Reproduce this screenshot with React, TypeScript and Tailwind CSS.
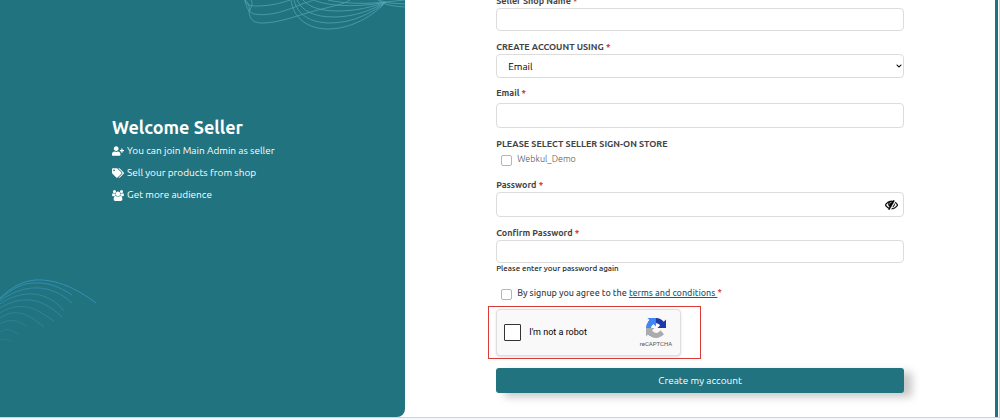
import type { ReactNode } from "react";
import { FaChevronDown, FaTags, FaUserPlus } from "react-icons/fa";

const inputStyle =
  "block w-full rounded border border-[#dcdcdc] bg-white px-3 text-[10px] text-black outline-none";

const checkboxStyle =
  "size-[11px] appearance-none rounded-[2px] border border-[#b5b5b5] bg-white checked:bg-[#227380]";

function Required() {
  return <span className="text-[#c9302c]">*</span>;
}

function Label({ htmlFor, children }: { htmlFor: string; children: ReactNode }) {
  return (
    <label htmlFor={htmlFor} className="block text-[9px] leading-[14px] font-semibold text-[#444]">
      {children} <Required />
    </label>
  );
}

function GroupIcon() {
  return (
    <svg viewBox="0 0 1920 1792" className="h-[11px] w-3 fill-current" aria-hidden="true">
      <path d="M593 896q-162 5-265 128H194q-82 0-138-40.5T0 865q0-353 124-353 6 0 43.5 21t97.5 42.5T384 597q67 0 133-23-5 37-5 66 0 139 81 256zm1071 637q0 120-73 189.5t-194 69.5H523q-121 0-194-69.5T256 1533q0-53 3.5-103.5t14-109T300 1212t43-97.5 62-81 85.5-53.5T602 960q10 0 43 21.5t73 48 107 48 135 21.5 135-21.5 107-48 73-48 43-21.5q61 0 111.5 20t85.5 53.5 62 81 43 97.5 26.5 108.5 14 109 3.5 103.5zM640 256q0 106-75 181t-181 75-181-75-75-181 75-181T384 0t181 75 75 181zm704 384q0 159-112.5 271.5T960 1024 688.5 911.5 576 640t112.5-271.5T960 256t271.5 112.5T1344 640zm576 225q0 78-56 118.5t-138 40.5h-134q-103-123-265-128 81-117 81-256 0-29-5-66 66 23 133 23 59 0 119-21.5t97.5-42.5 43.5-21q124 0 124 353zm-128-609q0 106-75 181t-181 75-181-75-75-181 75-181 181-75 181 75 75 181z" />
    </svg>
  );
}

function EyeSlashIcon() {
  return (
    <svg viewBox="0 288 1792 1344" className="h-[10px] w-[13px] fill-black stroke-black" strokeWidth="40" aria-hidden="true">
      <path d="M555 1335l78-141q-87-63-136-159t-49-203q0-121 61-225-229 117-381 353 167 258 427 375zm389-759q0-20-14-34t-34-14q-125 0-214.5 89.5T592 832q0 20 14 34t34 14 34-14 14-34q0-86 61-147t147-61q20 0 34-14t14-34zm363-191q0 7-1 9-106 189-316 567t-315 566l-49 89q-10 16-28 16-12 0-134-70-16-10-16-28 0-12 44-87-143-65-263.5-173T20 1029Q0 998 0 960t20-69q153-235 380-371t496-136q89 0 180 17l54-97q10-16 28-16 5 0 18 6t31 15.5 33 18.5 31.5 18.5T1291 358q16 10 16 27zm37 447q0 139-79 253.5T1056 1250l280-502q8 45 8 84zm448 128q0 35-20 69-39 64-109 145-150 172-347.5 267T896 1536l74-132q212-18 392.5-137T1664 960q-115-179-282-294l63-112q95 64 182.5 153T1772 891q20 34 20 69z" />
    </svg>
  );
}

function CaptchaLogo() {
  return (
    <svg viewBox="0 0 64 64" className="size-5" aria-hidden="true">
      <path fill="#1c3aa9" d="M64 31.955l-.033-1.37V4.687l-7.16 7.16C50.948 4.674 42.033.093 32.05.093c-10.4 0-19.622 4.96-25.458 12.64l11.736 11.86a15.55 15.55 0 0 1 4.754-5.334c2.05-1.6 4.952-2.906 8.968-2.906.485 0 .86.057 1.135.163 4.976.393 9.288 3.14 11.828 7.124l-8.307 8.307L64 31.953" />
      <path fill="#4285f4" d="M31.862.094l-1.37.033H4.594l7.16 7.16C4.58 13.147 0 22.06 0 32.046c0 10.4 4.96 19.622 12.64 25.458L24.5 45.768a15.55 15.55 0 0 1-5.334-4.754c-1.6-2.05-2.906-4.952-2.906-8.968 0-.485.057-.86.163-1.135.393-4.976 3.14-9.288 7.124-11.828l8.307 8.307L31.86.095" />
      <path fill="#ababab" d="M.001 32.045l.033 1.37v25.898l7.16-7.16c5.86 7.173 14.774 11.754 24.76 11.754 10.4 0 19.622-4.96 25.458-12.64l-11.736-11.86a15.55 15.55 0 0 1-4.754 5.334c-2.05 1.6-4.952 2.906-8.968 2.906-.485 0-.86-.057-1.135-.163-4.976-.393-9.288-3.14-11.828-7.124l8.307-8.307c-10.522.04-22.4.066-27.295-.005" />
    </svg>
  );
}

function TopWaves() {
  return (
    <svg viewBox="0 0 165 34" className="absolute top-0 right-0 h-[34px] w-[165px]" fill="none" stroke="#5fb4c4" strokeWidth="0.8" opacity="0.75" aria-hidden="true">
      <path d="M5 0C8 2 10 6 9 12C10 19 13 23 22 23C40 23 58 15 78 10C94 6 104 4 110 0" />
      <path d="M5 0C6 6 8 12 14 14C30 17 48 10 62 4C68 2 71 1 74 0" />
      <path d="M5 0C5 4 9 6 16 6C30 6 42 3 50 0" />
      <path d="M11 0C13 3 12 6 9 12" />
      <path d="M51 0C53 18 68 29 88 29C112 29 134 15 146 2" />
      <path d="M54 0C57 14 70 23 90 23C114 23 133 12 146 2" />
      <path d="M57 0C62 11 74 17 94 17C114 17 132 10 146 2" />
      <path d="M63 0C70 8 82 11 98 11C116 11 132 7 146 2" />
      <path d="M74 0C86 6 118 8 146 2" />
      <path d="M88 0C105 4 128 4 146 2L165 0" />
      <path d="M140 0C146 4 154 3 165 4" />
      <path d="M138 0C146 6 154 6 165 7" />
    </svg>
  );
}

function BottomWaves() {
  return (
    <svg viewBox="0 0 100 80" className="absolute bottom-[58px] left-0 h-20 w-[100px]" fill="none" stroke="#3d9bc4" strokeWidth="0.8" aria-hidden="true">
      <path opacity="0.9" d="M0 19C12 8 22 2 36 1C56 0 76 9 96 24" />
      <path opacity="0.8" d="M0 20C12 10 22 4 34 4C48 3 60 8 72 16" />
      <path opacity="0.7" d="M0 22C16 10 34 6 50 11C62 15 66 19 72 24" />
      <path opacity="0.6" d="M0 25C16 14 34 12 48 19C56 23 60 27 64 32" />
      <path opacity="0.6" d="M0 29C16 19 32 19 44 25C52 29 58 34 62 38" />
      <path opacity="0.5" d="M0 34C14 25 28 26 40 33L54 42" />
      <path opacity="0.5" d="M0 39C12 31 22 33 32 39L44 48" />
      <path opacity="0.4" d="M0 45C8 40 16 40 26 47" />
      <path opacity="0.35" d="M0 53C6 49 10 50 18 55" />
      <path opacity="0.3" d="M0 61C5 59 8 60 12 63" />
    </svg>
  );
}

const benefits = [
  { icon: <FaUserPlus className="w-3" />, text: "You can join Main Admin as seller" },
  { icon: <FaTags className="w-3" />, text: "Sell your products from shop" },
  { icon: <GroupIcon />, text: "Get more audience" },
];

export default function App() {
  return (
    <div className="min-h-screen overflow-hidden bg-[#f3f6fb] font-[Ubuntu,'Noto_Sans',sans-serif]">
      <div className="flex border-r border-b border-[#ccd3df] bg-white pr-px">
        <aside className="relative w-[40.6%] overflow-hidden rounded-br-lg bg-[#227380] pt-[116px] pl-28 text-white">
          <TopWaves />
          <BottomWaves />
          <h1 className="text-lg leading-[22px] font-bold">Welcome Seller</h1>
          <ul className="mt-[6px] flex flex-col gap-2">
            {benefits.map((item) => (
              <li key={item.text} className="flex items-center gap-[3px] text-[10px] leading-[14px]">
                {item.icon}
                <span>{item.text}</span>
              </li>
            ))}
          </ul>
        </aside>

        <main className="flex-1 border-r-[3px] border-[#227380] px-[91px]">
          <form className="-mt-[6px] pb-6" onSubmit={(e) => e.preventDefault()}>
            <Label htmlFor="shop">Seller Shop Name</Label>
            <input id="shop" type="text" className={`${inputStyle} h-[23px]`} />

            <div className="mt-[9px]">
              <Label htmlFor="method">CREATE ACCOUNT USING</Label>
              <div className="relative">
                <select id="method" className="block h-6 w-full appearance-none rounded border border-[#dcdcdc] bg-white px-[11px] text-[10px] text-black">
                  <option>Email</option>
                  <option>Phone</option>
                </select>
                <FaChevronDown className="pointer-events-none absolute top-[9px] right-[2px] size-[6px] text-black" />
              </div>
            </div>

            <div className="mt-2">
              <Label htmlFor="email">Email</Label>
              <input id="email" type="email" className={`${inputStyle} mt-[3px] h-[25px]`} />
            </div>

            <fieldset className="mt-[9px]">
              <legend className="text-[9px] leading-[14px] font-semibold text-[#444]">
                PLEASE SELECT SELLER SIGN-ON STORE
              </legend>
              <label className="mt-[3px] ml-[5px] flex h-3 items-center gap-[5px] text-[9px] font-light text-[#555]">
                <input type="checkbox" className={checkboxStyle} />
                Webkul_Demo
              </label>
            </fieldset>

            <div className="mt-3">
              <Label htmlFor="password">Password</Label>
              <div className="flex h-[25px] items-center rounded border border-[#dcdcdc] pr-[5px]">
                <input id="password" type="password" className="h-full min-w-0 flex-1 bg-transparent px-3 text-[10px] outline-none" />
                <button type="button" aria-label="Show password">
                  <EyeSlashIcon />
                </button>
              </div>
            </div>

            <div className="mt-[9px]">
              <Label htmlFor="confirm">Confirm Password</Label>
              <input id="confirm" type="password" className={`${inputStyle} h-[23px]`} aria-describedby="confirm-help" />
              <p id="confirm-help" className="text-[8px] leading-[11px] font-medium text-[#222]">
                Please enter your password again
              </p>
            </div>

            <div className="mt-[14px] ml-[5px] flex h-3 items-center gap-[5px] text-[9px] font-medium text-[#444]">
              <input id="terms" type="checkbox" className={checkboxStyle} />
              <span>
                <label htmlFor="terms">By signup you agree to the</label>{" "}
                <a href="#terms" className="text-[#1f5f78] underline">terms and conditions </a> <Required />
              </span>
            </div>

            <div className="mt-[6px] -ml-2 w-[213px] border border-solid border-[#dc3a37] py-[2px] pl-[7px]">
              <div className="flex h-[47px] w-[185px] items-center rounded-sm border border-[#dedede] bg-[#f9f9f9] pr-2 pl-[7px] shadow-sm">
                <label className="flex flex-1 items-center gap-2 font-[Roboto,sans-serif] text-[9px] text-black">
                  <input type="checkbox" className="size-[17px] appearance-none rounded-[1px] border border-[#333] bg-white checked:bg-[#4285f4]" />
                  I'm not a robot
                </label>
                <div className="flex flex-col items-center gap-[2px]">
                  <CaptchaLogo />
                  <span className="font-[Roboto,sans-serif] text-[6px] leading-[8px] text-[#555]">reCAPTCHA</span>
                </div>
              </div>
            </div>

            <button type="submit" className="mt-[9px] block h-[25px] w-full rounded-[3px] bg-[#227380] text-[10px] text-white shadow-[8px_4px_8px_rgba(0,0,0,0.22)]">
              Create my account
            </button>
          </form>
        </main>
      </div>
    </div>
  );
}
